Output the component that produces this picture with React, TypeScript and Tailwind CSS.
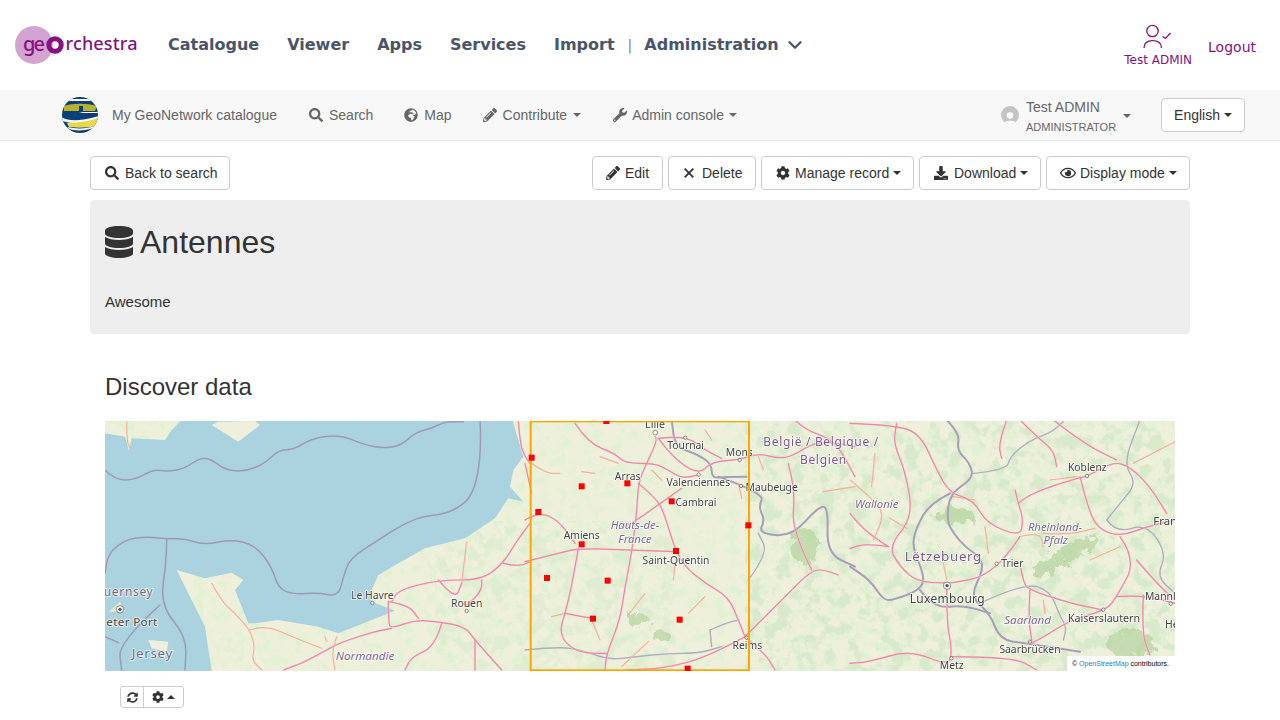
import React from 'react';
import { FaSearch, FaGlobeAfrica, FaPencilAlt, FaWrench, FaCog, FaDownload, FaRegEye, FaDatabase, FaSyncAlt } from 'react-icons/fa';
import { ChevronDown } from 'lucide-react';

// Map layers are traced per crop, in 3x coordinates, then scaled down
const westPink = [
  'M1275,310 L1240,355 L1195,430 L1130,480 L1000,480 L880,510 L860,545',
  'M1000,480 L1050,540 L1070,490',
  'M1130,480 L1135,510 L1080,560',
  'M850,545 L850,610 L860,625 L930,600 L1000,605 L1080,620 L1110,660 L1190,750',
  'M850,545 L910,555 L940,595',
  'M1010,610 L990,680 L920,710 L900,750',
  'M1110,660 L1110,750',
  'M860,625 L815,632 L700,670 L665,690 L590,730 L535,750',
  'M1195,430 L1240,440 L1275,425',
  'M1240,0 L1245,70 L1260,110 L1275,130',
];
const westOrange = [
  'M320,490 L350,545 L390,580 L435,630 L450,680 L440,720 L470,750',
  'M435,630 L480,615 L560,650 L650,685',
  'M695,650 L680,690 L690,750',
  'M1070,490 L1085,365',
  'M65,0 L65,60 L75,85',
  'M660,650 L665,665',
];
const westBorders = [
  'M0,150 L30,180 L90,180 L145,148 L190,155 L240,145 L285,113 L320,118 L360,150 L420,155 L480,130 L520,90 L570,88 L615,57 L700,43 L780,75 L840,85 L890,75 L930,38 L980,25 L1020,5 L1075,5',
  'M1125,0 L1130,100 L1105,225 L1055,268 L1000,285 L950,290 L890,315 L820,360 L735,415 L715,470 L700,530 L640,518 L565,523 L520,505 L500,440 L450,375 L380,358 L295,375 L240,355 L185,357 L120,350 L60,360 L10,400 L0,460',
  'M185,357 L185,420 L165,555 L245,650 L240,750',
  'M165,555 L40,668 L50,750',
  'M40,668 L0,650',
];

const centerPink = [
  'M150,10 L190,70 L270,100 L300,130 L390,130 L430,150 L470,175 L520,165',
  'M390,50 L400,55 L360,140 L340,190 L335,280 L320,400 L300,500 L285,600 L245,700 L240,750',
  'M340,190 L400,240 L420,290 L445,370 L455,395 L480,440 L540,490 L610,530 L640,600 L660,650',
  'M0,425 L100,400 L160,385 L320,390 L450,395',
  'M160,385 L140,500 L120,580 L105,630 L120,670 L170,700 L245,700',
  'M120,580 L200,595',
  'M470,205 L400,255 L320,310 L290,320',
  'M0,300 L40,276 L100,300 L150,370',
  'M20,220 L0,130',
  'M660,650 L550,710 L420,745 L300,750',
  'M660,650 L780,530 L860,450 L900,450 L940,465',
  'M400,55 L440,110 L520,165 L560,125 L640,120 L700,100 L760,115 L800,110 L880,60 L990,80',
  'M400,55 L480,45 L540,90 L590,115',
  'M860,450 L800,330 L810,220 L790,130',
  'M660,650 L720,700 L750,750',
  'M810,0 L840,30 L930,60 L990,170',
];
const centerOrange = [
  'M20,130 L60,160 L105,160',
  'M170,155 L210,160',
  'M225,110 L280,130',
  'M380,150 L410,180',
  'M200,600 L225,660',
  'M80,590 L120,580',
  'M310,585 L360,520',
  'M490,580 L540,530',
  'M450,440 L445,480',
  'M290,740 L370,665',
  'M895,215 L990,200',
  'M540,30 L560,60',
  'M700,110 L715,150',
  'M640,190 L650,235',
];
const centerBorders = [
  'M665,170 L600,170 L560,175 L560,130 L510,100 L450,80 L440,0',
  'M580,170 L720,220 L700,260 L720,300 L700,340 L800,350 L880,260 L910,260 L905,400 L990,440',
];
const centerThin = [
  'M670,480 L730,400 L700,340',
  'M555,630 L600,610 L640,600',
  'M0,690 L100,680 L170,690 L250,720 L330,710 L430,700 L520,700 L590,680',
  'M555,630 L560,680',
];
const centerRed = [
  [244, 3], [20, 113], [170, 199], [307, 190], [440, 244], [40, 276], [670, 316],
  [170, 373], [453, 393], [66, 474], [248, 482], [204, 596], [464, 599], [488, 746],
];

const eastPink = [
  'M0,10 L130,15 L210,40 L260,150 L300,220 L370,240 L410,310 L510,350 L520,300 L505,250 L495,210',
  'M505,250 L540,220 L680,175 L710,170 L790,125 L840,140 L900,200 L950,280',
  'M690,170 L710,250 L740,325 L810,350 L890,320 L975,300',
  'M810,350 L860,420 L800,530 L770,570 L660,600 L560,665 L530,670',
  'M860,420 L920,490 L975,540',
  'M510,350 L470,410 L400,470 L330,485 L290,490 L200,485 L150,440 L115,380 L190,290 L165,150 L130,70 L140,10',
  'M115,380 L50,370 L0,385',
  'M290,490 L290,610 L305,680 L300,740 L180,690 L60,725 L0,730',
  'M300,710 L490,710 L560,750',
  'M510,430 L520,490 L540,510 L660,550 L760,570',
  'M540,510 L535,590 L545,660',
  'M800,530 L880,525 L975,550',
  'M880,525 L875,640 L900,705',
  'M470,0 L445,70 L455,115',
  'M510,0 L560,50 L610,90 L620,140',
  'M610,0 L700,70 L800,120',
  'M0,280 L40,330 L115,380',
];
const eastOrange = [
  'M65,200 L75,100',
  'M0,180 L60,230 L105,280 L70,360',
  'M405,320 L415,400',
  'M510,350 L570,335 L580,380',
  'M580,340 L650,345 L735,325',
  'M720,420 L810,380',
  'M280,430 L290,480',
  'M850,130 L975,65',
  'M600,180 L680,170',
  'M120,295 L170,325',
  'M580,540 L585,580',
  'M310,230 L375,240',
];
const eastBorders = [
  'M290,0 L330,40 L320,90 L360,130 L370,175 L300,220 L290,300 L310,340 L350,385 L390,410 L400,450 L360,530 L420,580 L450,660 L530,670 L690,695',
  'M300,220 L240,250 L200,320 L185,380 L225,470 L210,510 L130,540 L100,540 L60,480 L0,440',
  'M210,510 L250,565 L340,555 L420,580',
];
const eastThin = [
  'M370,160 L470,150 L480,110 L540,60 L600,40 L640,5',
  'M400,545 L520,490 L600,510 L630,590 L650,620 L640,660',
  'M770,300 L810,250 L860,190 L820,130 L870,0',
  'M770,300 L800,340 L890,310 L950,400 L920,470 L975,520',
];

// rounds the corners of a traced polyline through the segment midpoints
const smooth = (d: string) => {
  const pts = d.replace(/[ML]/g, '').trim().split(/\s+/).map((p) => p.split(',').map(Number));
  let out = `M${pts[0][0]},${pts[0][1]}`;
  for (let i = 1; i < pts.length - 1; i++) {
    const mx = (pts[i][0] + pts[i + 1][0]) / 2;
    const my = (pts[i][1] + pts[i + 1][1]) / 2;
    out += ` Q${pts[i][0]},${pts[i][1]} ${mx},${my}`;
  }
  const last = pts[pts.length - 1];
  return `${out} L${last[0]},${last[1]}`;
};

const Lines = ({ d, color, width, casing }: { d: string[]; color: string; width: number; casing?: string }) => (
  <g fill="none" strokeLinejoin="round" strokeLinecap="round">
    {casing && d.map((p) => <path key={`c${p}`} d={smooth(p)} stroke={casing} strokeWidth={width + 2} />)}
    {d.map((p) => (
      <path key={p} d={smooth(p)} stroke={color} strokeWidth={width} />
    ))}
  </g>
);

const Label = ({ x, y, size = 31, color = '#444444', italic = false, spacing = 0, anchor = 'middle', children }: any) => (
  <text
    x={x}
    y={y}
    fontSize={size}
    fill={color}
    fontStyle={italic ? 'italic' : 'normal'}
    letterSpacing={spacing}
    textAnchor={anchor}
    stroke="#ffffff"
    strokeOpacity={0.75}
    strokeWidth={5}
    paintOrder="stroke"
    fontFamily="'Noto Sans', sans-serif"
  >
    {children}
  </text>
);

const Dot = ({ x, y, r = 5 }: { x: number; y: number; r?: number }) => (
  <circle cx={x} cy={y} r={r} fill="#ffffff" stroke="#555555" strokeWidth={2} />
);

const BBoxMap = () => (
  <svg viewBox="0 0 1070 250" width={1070} height={250} className="block blur-[0.35px]">
    <defs>
      <filter id="woods" x="0" y="0" width="100%" height="100%">
        <feTurbulence type="fractalNoise" baseFrequency="0.09" numOctaves={4} seed={7} />
        <feColorMatrix values="0 0 0 0 0.76  0 0 0 0 0.88  0 0 0 0 0.66  4 4 0 0 -3.9" />
      </filter>
      <filter id="forest" x="0" y="0" width="100%" height="100%">
        <feTurbulence type="fractalNoise" baseFrequency="0.07" numOctaves={4} seed={21} />
        <feColorMatrix values="0 0 0 0 0.68  0 0 0 0 0.82  0 0 0 0 0.6  7 0 0 0 -3.4" />
      </filter>
      <filter id="rough" x="-20%" y="-20%" width="140%" height="140%">
        <feTurbulence type="fractalNoise" baseFrequency="0.12" numOctaves={4} seed={4} result="n" />
        <feDisplacementMap in="SourceGraphic" in2="n" scale={16} />
      </filter>
    </defs>
    <rect width={1070} height={250} fill="#eff0db" />
    <rect width={1070} height={250} filter="url(#woods)" />
    <rect x={640} width={430} height={250} filter="url(#forest)" opacity={0.9} />
    <rect x={330} y={100} width={240} height={150} filter="url(#forest)" opacity={0.55} />

    {/* darker woodland blocks */}
    <g filter="url(#rough)" fill="#b8d5a2" opacity={0.75}>
      <ellipse cx={533} cy={199} rx={11} ry={7} />
      <ellipse cx={556} cy={215} rx={10} ry={5} />
      <ellipse cx={700} cy={125} rx={14} ry={18} />
      <ellipse cx={1025} cy={222} rx={24} ry={14} />
      <ellipse cx={960} cy={135} rx={38} ry={8} transform="rotate(-30 960 135)" />
      <ellipse cx={850} cy={95} rx={20} ry={9} />
    </g>

    {/* Sea, with the south of England and Wight left out */}
    <g transform="translate(0,-1) scale(0.33333)">
      <path
        fill="#aad3df"
        d="M230,0 L1222,0 L1240,60 L1255,110 L1225,150 L1215,200 L1255,245 L1210,235 L1170,295 L1080,355 L960,385 L880,430 L820,465 L800,510 L800,545 L870,572 L800,600 L700,640 L640,620 L520,600 L450,610 L430,610 L390,510 L415,480 L380,458 L300,475 L215,450 L240,500 L300,620 L320,753 L0,753 L0,40 L60,50 L72,92 L80,55 L180,60 L200,30 Z"
      />
      <path fill="#eff0db" d="M320,15 L400,65 L465,15 L450,3 L340,5 Z" />
      <path fill="#e4ead0" d="M10,575 L45,545 L60,575 Z" />
      <path fill="#eff0db" d="M130,660 L190,665 L185,695 L140,685 Z" />
      <Lines d={westBorders} color="#9d9ab6" width={4.5} />
      <Lines d={westOrange} color="#f9ae98" width={3.5} />
      <Lines d={westPink} color="#ec86a2" width={3.5} casing="#f8d3da" />
      <Label x={145} y={527} size={36} color="#6f6a84" anchor="end" spacing={2}>uernsey</Label>
      <Label x={158} y={617} size={35} anchor="end" spacing={1}>eter Port</Label>
      <Label x={142} y={714} size={40} color="#6f6a84" spacing={2}>Jersey</Label>
      <Label x={802} y={537}>Le Havre</Label>
      <Label x={1085} y={561}>Rouen</Label>
      <Label x={780} y={721} size={35} color="#7d6a92" italic>Normandie</Label>
      <Dot x={802} y={549} />
      <Dot x={1085} y={573} />
      <circle cx={45} cy={568} r={11} fill="#ffffff" stroke="#555555" strokeWidth={2} />
      <circle cx={45} cy={568} r={5} fill="#555555" />
    </g>

    <g transform="translate(745,-1) scale(0.33333)">
      <Lines d={eastThin} color="#b0acc0" width={4} />
      <Lines d={eastBorders} color="#a79fb8" width={6} />
      <Lines d={eastOrange} color="#f9ae98" width={3.5} />
      <Lines d={eastPink} color="#ec86a2" width={3.5} casing="#f8d3da" />
      <Label x={80} y={263} size={34} color="#7d6a92" italic>Wallonie</Label>
      <Label x={280} y={422} size={40} color="#7d5a8c" spacing={2}>Lëtzebuerg</Label>
      <Label x={292} y={549} size={36} spacing={1}>Luxembourg</Label>
      <Label x={487} y={442}>Trier</Label>
      <Label x={712} y={153}>Koblenz</Label>
      <Label x={615} y={332} size={34} color="#7d6a92" italic>Rheinland-</Label>
      <Label x={617} y={373} size={34} color="#7d6a92" italic>Pfalz</Label>
      <Label x={533} y={613} size={35} color="#7d6a92" italic>Saarland</Label>
      <Label x={762} y={606} size={32}>Kaiserslautern</Label>
      <Label x={540} y={700}>Saarbrücken</Label>
      <Label x={305} y={748}>Metz</Label>
      <Label x={885} y={539} anchor="start">Mannh</Label>
      <Label x={910} y={316} size={34} anchor="start">Fran</Label>
      <Label x={945} y={623} anchor="start">He</Label>
      <Dot x={440} y={431} />
      <Dot x={711} y={168} />
      <Dot x={760} y={569} />
      <Dot x={540} y={665} />
      <Dot x={304} y={715} />
      <Dot x={962} y={551} />
      <circle cx={291} cy={497} r={11} fill="#ffffff" stroke="#555555" strokeWidth={2} />
      <circle cx={291} cy={497} r={5} fill="#555555" />
    </g>

    <g transform="translate(420,-1) scale(0.33333)">
      <Lines d={centerThin} color="#b0acc0" width={4} />
      <Lines d={centerBorders} color="#a79fb8" width={6} />
      <Lines d={centerOrange} color="#f9ae98" width={3.5} />
      <Lines d={centerPink} color="#ec86a2" width={3.5} casing="#f8d3da" />
      <Label x={390} y={24} size={32}>Lille</Label>
      <Label x={482} y={86}>Tournai</Label>
      <Label x={643} y={108}>Mons</Label>
      <Label x={308} y={181}>Arras</Label>
      <Label x={520} y={198}>Valenciennes</Label>
      <Label x={740} y={212}>Maubeuge</Label>
      <Label x={513} y={257}>Cambrai</Label>
      <Label x={330} y={327} size={34} color="#7d6a92" italic>Hauts-de-</Label>
      <Label x={330} y={368} size={34} color="#7d6a92" italic>France</Label>
      <Label x={170} y={358}>Amiens</Label>
      <Label x={453} y={433}>Saint-Quentin</Label>
      <Label x={667} y={688}>Reims</Label>
      <Label x={715} y={79} size={36} color="#7d5a8c" anchor="start" spacing={2}>België / Belgique /</Label>
      <Label x={825} y={131} size={36} color="#7d5a8c" anchor="start" spacing={2}>Belgien</Label>
      <Dot x={391} y={38} r={7} />
      <Dot x={481} y={53} />
      <Dot x={644} y={120} />
      <Dot x={521} y={164} />
      <Dot x={648} y={198} />
      <Dot x={665} y={653} />
      <rect x={17} y={4} width={655} height={747} fill="none" stroke="#ffa500" strokeWidth={6} />
      {centerRed.map(([x, y]) => (
        <rect key={`${x}-${y}`} x={x - 9} y={y - 9} width={18} height={18} fill="#ff0000" />
      ))}
    </g>
  </svg>
);

const Caret = ({ up = false }: { up?: boolean }) => (
  <span
    className={`block w-0 h-0 border-x-4 border-x-transparent ${up ? 'border-b-4 border-b-current' : 'border-t-4 border-t-current'}`}
  />
);

const ActionButton = ({ icon, label, caret = false, width, pl, textMl }: any) => (
  <button className={`h-[34px] ${width} ${pl} flex items-center bg-white border border-[#cccccc] rounded text-sm text-[#333333] whitespace-nowrap`}>
    {icon}
    <span className={textMl}>{label}</span>
    {caret && (
      <span className="ml-1">
        <Caret />
      </span>
    )}
  </button>
);

const headerLinks = ['Catalogue', 'Viewer', 'Apps', 'Services'];

const UserCheck = () => (
  <svg width={30} height={28} viewBox="0 0 30 28" fill="none" stroke="#85127e" strokeWidth={1.3}>
    <circle cx={9.5} cy={8} r={5.7} />
    <path d="M1 25 C1 19.5 4.5 17.7 9.5 17.7 C14.5 17.7 18.5 19.5 18.5 25" />
    <path d="M19.5 13.3 L22.5 15.5 L27.5 10" />
  </svg>
);

const GeoNetworkLogo = () => (
  <svg width={38} height={36} viewBox="0 0 38 36">
    <defs>
      <clipPath id="gn-globe">
        <ellipse cx={19} cy={18} rx={18} ry={18} />
      </clipPath>
    </defs>
    <g clipPath="url(#gn-globe)">
      <rect width={38} height={36} fill="#0b3f78" />
      <path d="M0,2 H38 V4 H0 Z" fill="#f7f7f7" />
      <path d="M3,9 C12,6 26,6 36,9 L34,14 H22 V9 H18 V14 H3 Z" fill="#b9b22a" />
      <path d="M0,15 H38 V16 H22 L18,15 Z" fill="#f7f7f7" />
      <path d="M6,26 C14,24 26,24 37,21 L36,29 C26,31 14,31 8,30 Z" fill="#e8d84a" />
      <path d="M0,20 C8,25 20,24 38,19 L38,21 C22,26 8,27 2,24 Z" fill="#f7f7f7" />
      <path d="M6,30 C14,32 26,32 34,29 L33,31 C24,34 14,34 8,32 Z" fill="#f7f7f7" />
    </g>
  </svg>
);

const OrchestraLogo = () => (
  <svg width={125} height={40} viewBox="0 0 125 40" className="shrink-0">
    <circle cx={19} cy={20} r={19} fill="#d3a4d1" />
    <circle cx={40} cy={20} r={6.2} fill="none" stroke="#85127e" strokeWidth={5} />
    <text x={8} y={26} fontSize={20} fontWeight={500} fill="#85127e" fontFamily="'Noto Sans', sans-serif" textLength={22}>ge</text>
    <text x={50.5} y={25} fontSize={18} fontWeight={500} fill="#85127e" fontFamily="'Noto Sans', sans-serif" textLength={72}>rchestra</text>
  </svg>
);

const App = () => {
  return (
    <div className="h-screen overflow-hidden bg-white font-['Liberation_Sans',sans-serif] text-sm text-[#333333]">
      {/* Platform header */}
      <header className="h-[90px] flex items-center pl-[15px] pr-6 font-['DejaVu_Sans',sans-serif]">
        <OrchestraLogo />
        <nav className="ml-[28px] flex items-center gap-7 text-base font-bold text-[#4a5568]">
          {headerLinks.map((l) => (
            <span key={l}>{l}</span>
          ))}
          <span>Import</span>
          <span className="-ml-[15px] font-normal text-sm text-[#718096]">|</span>
          <span className="-ml-[16px] flex items-center gap-[5px]">
            Administration
            <ChevronDown size={22} strokeWidth={2.6} />
          </span>
        </nav>
        <div className="ml-auto flex items-start gap-4 text-[#85127e]">
          <div className="flex flex-col items-center text-xs">
            <span className="mt-[1px]">
              <UserCheck />
            </span>
            <span className="mt-[1px]">Test ADMIN</span>
          </div>
          <span className="mt-[15px] text-sm">Logout</span>
        </div>
      </header>

      {/* Catalogue navbar */}
      <div className="h-[51px] bg-[#f8f8f8] border-b border-[#e7e7e7] flex items-center pl-[61px] pr-[35px] text-[#666666]">
        <GeoNetworkLogo />
        <span className="ml-[13px]">My GeoNetwork catalogue</span>
        <div className="ml-8 flex items-center gap-[31px]">
          <span className="flex items-center gap-[6px]">
            <FaSearch size={14} />
            Search
          </span>
          <span className="flex items-center gap-[6px]">
            <FaGlobeAfrica size={14} />
            Map
          </span>
          <span className="flex items-center gap-[6px]">
            <FaPencilAlt size={14} />
            Contribute
            <Caret />
          </span>
          <span className="ml-[1px] flex items-center gap-[5px]">
            <FaWrench size={14} />
            Admin console
            <Caret />
          </span>
        </div>
        <div className="ml-auto flex items-center">
          <span className="w-[18px] h-[18px] rounded-full bg-[#c4c4c4] flex items-end justify-center overflow-hidden">
            <svg width={14} height={14} viewBox="0 0 14 14" fill="#ffffff">
              <circle cx={7} cy={5.5} r={3.2} />
              <path d="M0,14 C1,9.5 13,9.5 14,14 Z" />
            </svg>
          </span>
          <div className="ml-[7px] mt-[4px] flex flex-col">
            <span className="leading-[18px]">Test ADMIN</span>
            <span className="text-[11px] leading-[17px] mt-[3px]">ADMINISTRATOR</span>
          </div>
          <span className="ml-[7px] mt-[2px]">
            <Caret />
          </span>
          <button className="ml-[30px] h-[34px] px-3 flex items-center gap-1 bg-white border border-[#cccccc] rounded text-[#333333]">
            English
            <Caret />
          </button>
        </div>
      </div>

      <main className="px-[90px]">
        {/* Record toolbar */}
        <div className="mt-[15px] flex items-center">
          <ActionButton icon={<FaSearch size={14} />} label="Back to search" width="w-[140px]" pl="pl-[14px]" textMl="ml-[6px]" />
          <div className="ml-auto flex items-center gap-[5px]">
            <ActionButton icon={<FaPencilAlt size={14} />} label="Edit" width="w-[71px]" pl="pl-[13px]" textMl="ml-[5px]" />
            <ActionButton
              icon={
                <svg width={10} height={10} viewBox="0 0 10 10" stroke="currentColor" strokeWidth={1.8} fill="none">
                  <path d="M0.7,0.7 L9.3,9.3 M9.3,0.7 L0.7,9.3" />
                </svg>
              }
              label="Delete"
              width="w-[88px]"
              pl="pl-[15px]"
              textMl="ml-[8px]"
            />
            <ActionButton icon={<FaCog size={14} />} label="Manage record" caret width="w-[153px]" pl="pl-[14px]" textMl="ml-[5px]" />
            <ActionButton icon={<FaDownload size={14} />} label="Download" caret width="w-[122px]" pl="pl-[14px]" textMl="ml-[6px]" />
            <ActionButton icon={<FaRegEye size={16} />} label="Display mode" caret width="w-[144px]" pl="pl-[13px]" textMl="ml-[4px]" />
          </div>
        </div>

        {/* Title panel */}
        <section className="mt-[10px] h-[134px] bg-[#eeeeee] rounded px-[15px] pt-[22px]">
          <h1 className="flex items-center gap-[7px] text-[32px] leading-[40px] text-[#333333]">
            <FaDatabase className="w-[28px] h-[32px]" />
            Antennes
          </h1>
          <p className="mt-[30px] text-[15px] leading-5">Awesome</p>
        </section>

        <section className="px-[15px]">
          <h2 className="mt-[38px] text-2xl leading-[30px] text-[#333333]">Discover data</h2>
          <div className="relative mt-[19px] h-[250px] overflow-hidden">
            <BBoxMap />
            <div className="absolute right-0 bottom-0 h-[15px] pl-[5px] pr-[6px] bg-white text-[7px] leading-[15px] text-black">
              © <span className="text-[#337ab7]">OpenStreetMap</span> contributors.
            </div>
          </div>
          <div className="mt-[15px] ml-[15px] inline-flex h-[22px] border border-[#cccccc] rounded-[3px] text-[#333333]">
            <span className="w-[23px] flex items-center justify-center border-r border-[#cccccc]">
              <FaSyncAlt size={11} />
            </span>
            <span className="w-[39px] flex items-center justify-center gap-[3px]">
              <FaCog size={12} />
              <Caret up />
            </span>
          </div>
        </section>
      </main>
    </div>
  );
};

export default App;
